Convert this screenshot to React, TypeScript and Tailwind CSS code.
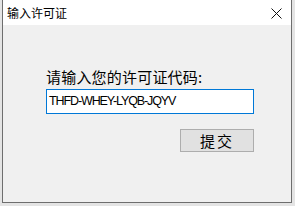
export default function App() {
  const cjk = { fontFamily: '"Microsoft YaHei", "Noto Sans CJK SC", "Noto Sans", sans-serif' };
  return (
    <div className="w-[295px] h-[206px] bg-[#e4e4e4] overflow-hidden">
      <div className="ml-[2px] w-[290px] h-[203px] border-x border-b border-[#6e6e6e] bg-[#f0f0f0] flex flex-col">
        <div className="h-[25px] bg-white flex items-center justify-between pl-[4px] pr-[9px] shrink-0">
          <span className="text-[12px] text-black leading-none" style={cjk}>输入许可证</span>
          <svg width="11" height="11" viewBox="0 0 11 11" className="mt-[1px]">
            <path d="M0.5 0.5 L10.5 10.5 M10.5 0.5 L0.5 10.5" stroke="#111" strokeWidth="1" />
          </svg>
        </div>
        <div className="flex flex-col pl-[43px] pt-[43px]">
          <div className="text-[15px] leading-[18px] text-black tracking-[0.2px]" style={cjk}>请输入您的许可证代码:</div>
          <div className="mt-[3px] w-[208px] h-[25px] border border-[#0078d7] bg-white flex items-center pl-[2px]">
            <span className="text-[12.5px] text-black leading-none tracking-[-1.1px]" style={{ fontFamily: '"Liberation Sans", Arial, sans-serif' }}>THFD-WHEY-LYQB-JQYV</span>
          </div>
          <div className="mt-[15px] ml-[134px] w-[74px] h-[23px] border border-[#adadad] bg-[#e1e1e1] flex items-center justify-center">
            <span className="text-[15px] leading-none text-black tracking-[2px]" style={cjk}>提交</span>
          </div>
        </div>
      </div>
    </div>
  );
}
